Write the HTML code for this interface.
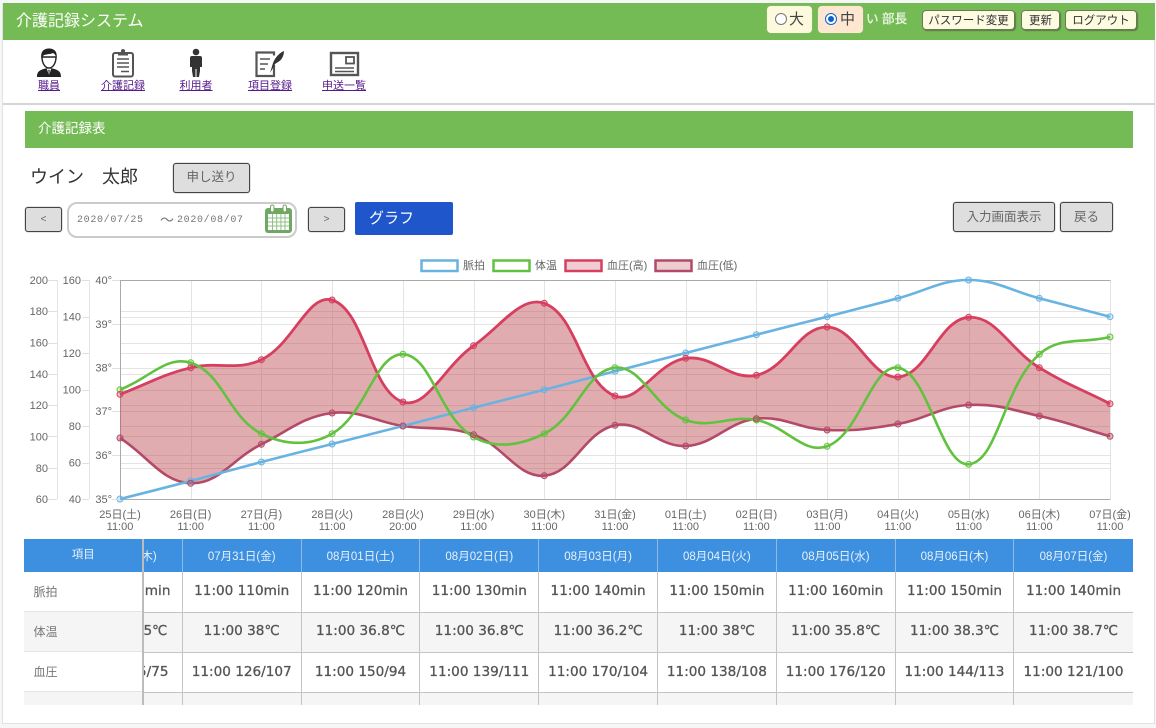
<!DOCTYPE html>
<html lang="ja"><head><meta charset="utf-8"><title>介護記録システム</title>
<style>
*{box-sizing:border-box}
html,body{margin:0;padding:0;width:1156px;height:728px;overflow:hidden;background:#f6f6f6;
font-family:"Liberation Sans","Noto Sans CJK JP",sans-serif}
.a{position:absolute}
#frame{left:2px;top:3px;width:1153px;height:721px;background:#fff;border:1px solid #e2e2e2;border-top:0}
.btn{position:absolute;display:flex;align-items:center;justify-content:center;background:#dedede;border:1px solid #444;border-radius:3px;color:#666;box-shadow:0 0 1px #555}
.tb{position:absolute;top:10px;height:20px;display:flex;align-items:center;justify-content:center;background:#fdfbe0;border:1px solid #6b7a55;border-radius:4px;font-size:11.5px;color:#333;box-shadow:1px 1px 1px #5a7a45}
.nav{position:absolute;top:79px;font-size:11px;line-height:14px;color:#551a8b;text-decoration:underline;text-align:center;width:70px}
table{border-collapse:collapse;table-layout:fixed}
td,th{padding:0;text-align:center;border-left:1.5px solid #c4c4c4;border-bottom:1.5px solid #c4c4c4;overflow:hidden;white-space:nowrap}
th{background:#3d8fe0;color:#e8f2fc;font-weight:normal;font-size:11.5px;height:33px;border-left:1.5px solid #8fb8e2;border-bottom:0}
td{font-family:"DejaVu Sans","Noto Sans CJK JP",sans-serif;font-size:13.6px;color:#555;height:40px;-webkit-text-stroke:.3px #555}
tr.up td{padding-bottom:2px}
tr.g td{background:#f5f5f5}
.fx{position:absolute;left:0;width:118.5px;font-size:12px;color:#777;padding-left:9.5px;display:flex;align-items:center;border-bottom:1.5px solid #e4e4e4;background:#fff}
svg text{font-family:"Liberation Sans","Noto Sans CJK JP",sans-serif;font-size:11px;fill:#666}
</style></head><body>
<div class="a" id="frame"></div>

<div class="a" style="left:3px;top:3px;width:1152px;height:37px;background:#75bb55"></div>
<div class="a" style="left:16px;top:12px;font-size:16px;line-height:20px;color:#fff">介護記録システム</div>

<div class="a" style="left:767px;top:6px;width:45px;height:27px;background:#fdf9dc;border-radius:4px;box-shadow:0 0 1px #bbb"></div>
<div class="a" style="left:775px;top:13px;width:12px;height:12px;border-radius:50%;background:#fff;border:1px solid #777"></div>
<div class="a" style="left:789px;top:10px;font-size:15px;line-height:20px;color:#444">大</div>
<div class="a" style="left:818px;top:6px;width:45px;height:27px;background:#fde7d0;border-radius:4px;box-shadow:0 0 1px #bbb"></div>
<div class="a" style="left:825px;top:13px;width:12px;height:12px;border-radius:50%;background:#fff;border:1.5px solid #0a62d0"></div>
<div class="a" style="left:828px;top:16px;width:6px;height:6px;border-radius:50%;background:#0a62d0"></div>
<div class="a" style="left:840px;top:10px;font-size:15px;line-height:20px;color:#444">中</div>
<div class="a" style="left:866px;top:11px;font-size:12.5px;line-height:17px;color:#eef7e8;white-space:pre;-webkit-text-stroke:.3px #eef7e8">い 部長</div>
<div class="tb" style="left:922px;width:93px">パスワード変更</div>
<div class="tb" style="left:1021px;width:39px">更新</div>
<div class="tb" style="left:1065px;width:72px">ログアウト</div>

<!-- nav icons -->
<svg class="a" style="left:30px;top:44px" width="340" height="36" viewBox="0 0 340 36">
<!-- person -->
<path d="M7 33c0-6 3-7 10-9l2 2 2-2c7 2 10 3 10 9z" fill="#222"/>
<path d="M16.500 24l2.500 7 2.500-7-2.500 2z" fill="#fff"/>
<path d="M18.300 26l.7 6 .7-6z" fill="#222"/>
<path d="M12 13c0 6 3 11 7 11s7-5 7-11z" fill="#fff" stroke="#222" stroke-width="1.400"/>
<path d="M11.500 15c-1.500-8 3-10.500 7.500-10.500S28 7 26.500 15c-.5-3-1.500-5-3.500-6-3 1.500-8 1-9.500 2.500-1 1-1.500 2-2 3.500z" fill="#222"/>
<!-- clipboard -->
<rect x="83" y="9" width="20" height="23.500" rx="2" fill="#fff" stroke="#555" stroke-width="2"/>
<path d="M88 8.500h3V6q2-2 4 0v2.500h3v3H88z" fill="#555"/>
<path d="M87 15h12M87 19h12M87 23h12M91 27.500h8" stroke="#555" stroke-width="1.500"/>
<!-- man -->
<circle cx="166" cy="8" r="3.300" fill="#333"/>
<path d="M160 14q0-2 2-2h8q2 0 2 2v9h-2v4l-1 6h-2.500v-8h-1v8H163l-1-6v-4h-2z" fill="#333"/>
<!-- edit -->
<path d="M244 21v11h-17.500V8.500H244v3" fill="none" stroke="#555" stroke-width="2.200"/>
<path d="M230 15h10M230 20h8M230 25h5" stroke="#555" stroke-width="1.600"/>
<path d="M240 29l3-10c2-5 6-10 11-12 0 4-2 9-6 11l-3 2-2 4z" fill="#333"/>
<!-- card -->
<rect x="301" y="9" width="27" height="22" fill="#fff" stroke="#555" stroke-width="2.400"/>
<rect x="316" y="13" width="8" height="6.500" fill="#fff" stroke="#555" stroke-width="1.800"/>
<path d="M305 24h19M305 27.500h19" stroke="#555" stroke-width="1.500"/>
</svg>
<div class="nav" style="left:14px">職員</div>
<div class="nav" style="left:88px">介護記録</div>
<div class="nav" style="left:161px">利用者</div>
<div class="nav" style="left:235px">項目登録</div>
<div class="nav" style="left:309px">申送一覧</div>

<div class="a" style="left:3px;top:103px;width:1152px;height:1.500px;background:#d4d4d4"></div>

<div class="a" style="left:25px;top:111px;width:1108px;height:37px;background:#75bb55"></div>
<div class="a" style="left:38px;top:120px;font-size:13.5px;line-height:18px;color:#fff">介護記録表</div>

<div class="a" style="left:30px;top:165px;font-size:18px;line-height:24px;color:#333;white-space:pre">ウイン　太郎</div>
<div class="btn" style="left:173px;top:163px;width:77px;height:30px;font-size:12.5px;padding-bottom:6px">申し送り</div>

<div class="btn" style="left:25px;top:207px;width:37px;height:25px;font-size:10px">&lt;</div>
<div class="a" style="left:67px;top:202px;width:230px;height:36px;border:2px solid #cbcbcb;border-radius:10px;background:#fff"></div>
<div class="a" style="left:77px;top:214px;font-family:'Liberation Mono','Noto Sans CJK JP',monospace;font-size:10px;line-height:14px;letter-spacing:.67px;color:#777;white-space:pre">2020/07/25</div>
<div class="a" style="left:160px;top:212px;font-size:14px;line-height:16px;color:#777">～</div>
<div class="a" style="left:177px;top:214px;font-family:'Liberation Mono','Noto Sans CJK JP',monospace;font-size:10px;line-height:14px;letter-spacing:.67px;color:#777;white-space:pre">2020/08/07</div>
<svg class="a" style="left:264px;top:204px" width="29" height="30" viewBox="0 0 29 30">
<rect x="1" y="4" width="27" height="25" rx="3" fill="#6fa862"/>
<rect x="4" y="10" width="21" height="16" fill="#fff"/>
<path d="M4 14h21M4 18h21M4 22h21M8.500 10v16M12.700 10v16M16.900 10v16M21 10v16" stroke="#8fc084" stroke-width="1"/>
<rect x="6.500" y="1" width="3.500" height="7" rx="1.700" fill="#fff" stroke="#6fa862"/>
<rect x="19" y="1" width="3.500" height="7" rx="1.700" fill="#fff" stroke="#6fa862"/>
</svg>
<div class="btn" style="left:308px;top:207px;width:37px;height:25px;font-size:10px">&gt;</div>
<div class="a" style="left:355px;top:202px;width:98px;height:33px;background:#2056cc;border-radius:2px;color:#fff;font-size:15px;line-height:34px;padding-left:14px">グラフ</div>
<div class="btn" style="left:953px;top:202px;width:102px;height:30px;font-size:12.500px;padding-bottom:4px">入力画面表示</div>
<div class="btn" style="left:1060px;top:202px;width:53px;height:30px;font-size:12.500px;padding-bottom:4px">戻る</div>

<!-- chart -->
<svg class="a" style="left:0;top:250px" width="1156" height="285" viewBox="0 250 1156 285">
<g id="grid" fill="none" stroke="#e4e4e4" stroke-width="1"></g>
<g stroke="#aaa" stroke-width="1" fill="none">
<path d="M120 280.500H1110.500M120 499.500H1110.500M120.500 280V499"/>
</g>
<path d="M57.500 280V499M89.500 280V499" stroke="#e4e4e4" fill="none"/>
<path id="fill" fill="rgba(190,75,80,.46)" stroke="none"/>
<path id="pDark" fill="none" stroke="#b34a68" stroke-width="2.600"/>
<path id="pBlue" fill="none" stroke="#68b3e2" stroke-width="2.600"/>
<path id="pRed" fill="none" stroke="#d63f5f" stroke-width="2.800"/>
<path id="pGreen" fill="none" stroke="#62c23f" stroke-width="2.600"/>
<g id="dots"></g>
<g id="ticks" stroke="#e0e0e0"></g>
<g text-anchor="end">
<text x="48" y="284">200</text><text x="48" y="315">180</text><text x="48" y="346.500">160</text><text x="48" y="378">140</text><text x="48" y="409">120</text><text x="48" y="440.500">100</text><text x="48" y="472">80</text><text x="48" y="503">60</text>
<text x="81" y="284">160</text><text x="81" y="320.500">140</text><text x="81" y="357">120</text><text x="81" y="393.500">100</text><text x="81" y="430">80</text><text x="81" y="466.500">60</text><text x="81" y="503">40</text>
<text x="112" y="284">40°</text><text x="112" y="328">39°</text><text x="112" y="371.500">38°</text><text x="112" y="415">37°</text><text x="112" y="459">36°</text><text x="112" y="503">35°</text>
</g>
<g text-anchor="middle">
<text x="120" y="518">25日(土)</text><text x="120" y="530">11:00</text>
<text x="190.700" y="518">26日(日)</text><text x="190.700" y="530">11:00</text>
<text x="261.400" y="518">27日(月)</text><text x="261.400" y="530">11:00</text>
<text x="332.100" y="518">28日(火)</text><text x="332.100" y="530">11:00</text>
<text x="402.900" y="518">28日(火)</text><text x="402.900" y="530">20:00</text>
<text x="473.600" y="518">29日(水)</text><text x="473.600" y="530">11:00</text>
<text x="544.300" y="518">30日(木)</text><text x="544.300" y="530">11:00</text>
<text x="615" y="518">31日(金)</text><text x="615" y="530">11:00</text>
<text x="685.700" y="518">01日(土)</text><text x="685.700" y="530">11:00</text>
<text x="756.400" y="518">02日(日)</text><text x="756.400" y="530">11:00</text>
<text x="827.100" y="518">03日(月)</text><text x="827.100" y="530">11:00</text>
<text x="897.900" y="518">04日(火)</text><text x="897.900" y="530">11:00</text>
<text x="968.600" y="518">05日(水)</text><text x="968.600" y="530">11:00</text>
<text x="1039.300" y="518">06日(木)</text><text x="1039.300" y="530">11:00</text>
<text x="1110" y="518">07日(金)</text><text x="1110" y="530">11:00</text>
</g>
<!-- legend -->
<rect x="421.500" y="260.500" width="36" height="10.500" fill="#fff" stroke="#68b3e2" stroke-width="2.500"/>
<text x="463" y="269">脈拍</text>
<rect x="493.500" y="260.500" width="36" height="10.500" fill="#fff" stroke="#62c23f" stroke-width="2.500"/>
<text x="535" y="269">体温</text>
<rect x="565.500" y="260.500" width="36" height="10.500" fill="#f0cdd2" stroke="#d63f5f" stroke-width="2.500"/>
<text x="607" y="269">血圧(高)</text>
<rect x="655.500" y="260.500" width="36" height="10.500" fill="#eccdd2" stroke="#b34a68" stroke-width="2.500"/>
<text x="697" y="269">血圧(低)</text>
</svg>

<!-- table -->
<div class="a" style="left:24px;top:539px;width:1109px;height:166px;overflow:hidden;background:#fff">
<table class="a" style="left:39px;top:0;width:1069px">
<colgroup><col style="width:118.800px"><col style="width:118.800px"><col style="width:118.800px"><col style="width:118.800px"><col style="width:118.800px"><col style="width:118.800px"><col style="width:118.800px"><col style="width:118.800px"><col style="width:118.800px"></colgroup>
<tr><th>07月30日(木)</th><th>07月31日(金)</th><th>08月01日(土)</th><th>08月02日(日)</th><th>08月03日(月)</th><th>08月04日(火)</th><th>08月05日(水)</th><th>08月06日(木)</th><th>08月07日(金)</th></tr>
<tr class="up"><td>11:00 100min</td><td>11:00 110min</td><td>11:00 120min</td><td>11:00 130min</td><td>11:00 140min</td><td>11:00 150min</td><td>11:00 160min</td><td>11:00 150min</td><td>11:00 140min</td></tr>
<tr class="g up"><td>11:00 36.5℃</td><td>11:00 38℃</td><td>11:00 36.8℃</td><td>11:00 36.8℃</td><td>11:00 36.2℃</td><td>11:00 38℃</td><td>11:00 35.8℃</td><td>11:00 38.3℃</td><td>11:00 38.7℃</td></tr>
<tr><td>11:00 135/75</td><td>11:00 126/107</td><td>11:00 150/94</td><td>11:00 139/111</td><td>11:00 170/104</td><td>11:00 138/108</td><td>11:00 176/120</td><td>11:00 144/113</td><td>11:00 121/100</td></tr>
<tr class="g"><td></td><td></td><td></td><td></td><td></td><td></td><td></td><td></td><td></td></tr>
</table>
<div class="a" style="left:0;top:0;width:118.500px;height:33px;background:#3d8fe0;color:#e8f2fc;font-size:11.500px;line-height:33px;text-align:center">項目</div>
<div class="fx" style="top:33px;height:40px">脈拍</div>
<div class="fx" style="top:73px;height:40px;background:#f5f5f5">体温</div>
<div class="fx" style="top:113px;height:40px">血圧</div>
<div class="fx" style="top:153px;height:40px;background:#f5f5f5;align-items:flex-start;padding-top:11px;color:#666">食事量</div>
<div class="a" style="left:118px;top:0;width:1.500px;height:166px;background:#bcbcbc"></div>
</div>

<script>
(function(){
var xs=[];for(var i=0;i<15;i++)xs.push(120+i*70.714);
var S={
Blue:[499,481,462,444,426,407.7,389.7,371.3,353,334.7,316.7,298.3,280,298.3,316.7],
Green:[389.7,362.7,433.7,433.7,354.3,437,433.7,367.7,420,420,446.3,367.7,464.3,354.3,337],
Red:[394.3,367.7,359.7,300,402,345.7,303.3,396,358.3,375.3,327,377,317.3,367.7,403.7],
Dark:[438,483.3,444.3,413,426,434.7,475.7,425.3,446,418.7,430,424,405,416,436.3]};
var col={Blue:'#68b3e2',Green:'#62c23f',Red:'#d63f5f',Dark:'#b34a68'};
var cols={Blue:'rgba(104,179,226,.25)',Green:'rgba(98,194,63,.25)',Red:'rgba(214,63,95,.35)',Dark:'rgba(179,74,104,.4)'};
function cps(ys){var r=[];var t=0.4;for(var i=0;i<15;i++){
var px=xs[Math.max(i-1,0)],py=ys[Math.max(i-1,0)],nx=xs[Math.min(i+1,14)],ny=ys[Math.min(i+1,14)];
var d1=Math.hypot(xs[i]-px,ys[i]-py),d2=Math.hypot(nx-xs[i],ny-ys[i]);
var s1=d1/(d1+d2)||0,s2=d2/(d1+d2)||0;
r.push({ax:xs[i]-t*s1*(nx-px),ay:ys[i]-t*s1*(ny-py),bx:xs[i]+t*s2*(nx-px),by:ys[i]+t*s2*(ny-py)});}
return r;}
function f(n){return n.toFixed(1);}
function path(ys){var c=cps(ys),d='M'+f(xs[0])+' '+f(ys[0]);
for(var i=1;i<15;i++)d+='C'+f(c[i-1].bx)+' '+f(c[i-1].by)+' '+f(c[i].ax)+' '+f(c[i].ay)+' '+f(xs[i])+' '+f(ys[i]);return d;}
function rev(ys){var c=cps(ys),d='L'+f(xs[14])+' '+f(ys[14]);
for(var i=14;i>0;i--)d+='C'+f(c[i].ax)+' '+f(c[i].ay)+' '+f(c[i-1].bx)+' '+f(c[i-1].by)+' '+f(xs[i-1])+' '+f(ys[i-1]);return d+'Z';}
var dots='';
for(var k in S){document.getElementById('p'+k).setAttribute('d',path(S[k]));
for(var i=0;i<15;i++)dots+='<circle cx="'+f(xs[i])+'" cy="'+f(S[k][i])+'" r="3" fill="'+cols[k]+'" stroke="'+col[k]+'" stroke-width="1"/>';}
document.getElementById('dots').innerHTML=dots;
document.getElementById('fill').setAttribute('d',path(S.Red)+rev(S.Dark));
var g='',ti='',y;
for(var i=1;i<15;i++)g+='M'+(Math.round(xs[i])+.5)+' 280V499';
[7,6,5].forEach(function(n,a){for(var j=0;j<=n;j++){y=Math.round(280+219*j/n)+.5;
g+='M120 '+y+'H1110';
var x0=[48,82,112][a],x1=[57,89,120][a];ti+='<path d="M'+x0+' '+y+'H'+x1+'"/>';}});
document.getElementById('grid').innerHTML='<path d="'+g+'"/>';
document.getElementById('ticks').innerHTML=ti;
})();
</script>
</body></html>
